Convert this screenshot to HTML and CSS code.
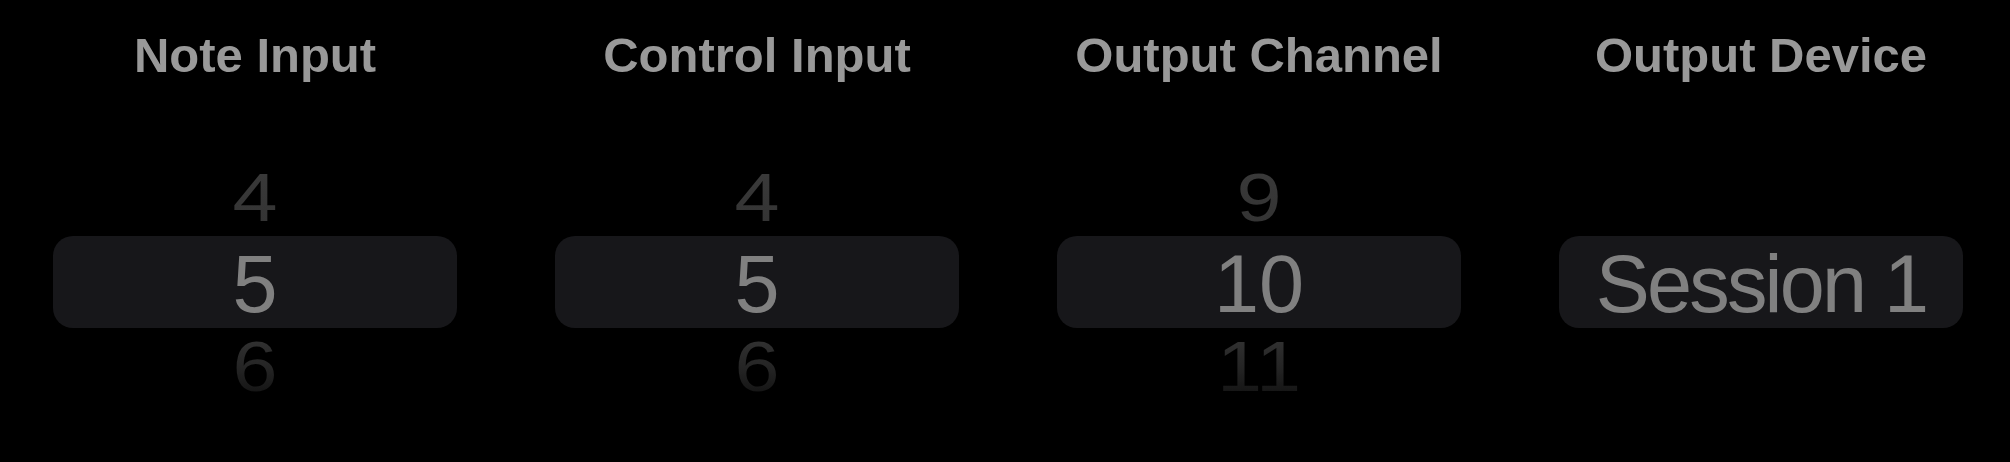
FILE: index.html
```html
<!DOCTYPE html>
<html>
<head>
<meta charset="utf-8">
<link rel="stylesheet" href="styles.css">
</head>
<body>
<div class="pickers">
  <section class="col">
    <h2 class="title">Note Input</h2>
    <div class="wheel">
      <div class="item above"><span>4</span></div>
      <div class="pill"><span>5</span></div>
      <div class="item below"><span>6</span></div>
    </div>
  </section>
  <section class="col">
    <h2 class="title">Control Input</h2>
    <div class="wheel">
      <div class="item above"><span>4</span></div>
      <div class="pill"><span>5</span></div>
      <div class="item below"><span>6</span></div>
    </div>
  </section>
  <section class="col">
    <h2 class="title">Output Channel</h2>
    <div class="wheel">
      <div class="item above"><span>9</span></div>
      <div class="pill"><span>10</span></div>
      <div class="item below"><span>11</span></div>
    </div>
  </section>
  <section class="col">
    <h2 class="title">Output Device</h2>
    <div class="wheel">
      <div class="item empty"></div>
      <div class="pill"><span class="session">Session 1</span></div>
      <div class="item empty"></div>
    </div>
  </section>
</div>
</body>
</html>
```
FILE: styles.css
```css
html, body {
  margin: 0;
  padding: 0;
  background: #000;
}
body {
  width: 2010px;
  height: 462px;
  overflow: hidden;
  font-family: "Liberation Sans", Arial, sans-serif;
}
.pickers {
  display: grid;
  grid-template-columns: repeat(4, 502px);
  padding-left: 4px;
}
.col {
  display: flex;
  flex-direction: column;
  align-items: center;
}
.title {
  margin: 31px 0 0;
  font-size: 49px;
  line-height: 49px;
  font-weight: 700;
  color: #999999;
  white-space: nowrap;
}
.wheel {
  margin-top: 78px;
  width: 404px;
  display: flex;
  flex-direction: column;
  align-items: stretch;
}
.item {
  height: 78px;
  display: flex;
  justify-content: center;
  font-size: 81px;
  line-height: 78px;
}
.item span {
  display: inline-block;
  background-clip: text;
  -webkit-background-clip: text;
  color: transparent;
}
.above span {
  transform: scaleY(0.84);
  background-image: linear-gradient(#3a3a3a, #333333);
}
.below span {
  transform: scaleY(0.86);
  background-image: linear-gradient(#343434, #232323 55%, #101010);
}
.pill {
  height: 92px;
  border-radius: 20px;
  background: #17171a;
  display: flex;
  justify-content: center;
  font-size: 81px;
  line-height: 92px;
  color: #808080;
  padding-top: 2px;
  box-sizing: border-box;
}
.session {
  letter-spacing: -2.8px;
}
```
